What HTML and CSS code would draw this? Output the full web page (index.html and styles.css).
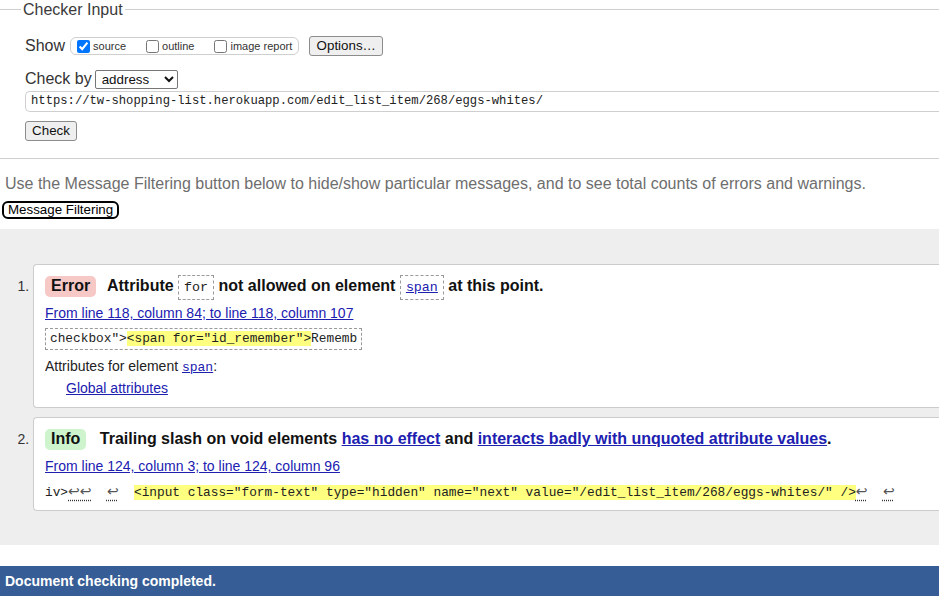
FILE: index.html
```html
<!DOCTYPE html>
<html lang="en">
<head>
<meta charset="utf-8">
<title>Nu Html Checker</title>
<link rel="stylesheet" href="styles.css">
</head>
<body>
<fieldset class="checker">
  <legend class="checker-legend">Checker Input</legend>
  <div class="row show-row">
    <span class="row-label">Show</span>
    <span class="pill">
      <label class="opt"><input class="cb" type="checkbox" checked><span>source</span></label>
      <label class="opt"><input class="cb" type="checkbox"><span>outline</span></label>
      <label class="opt"><input class="cb" type="checkbox"><span>image report</span></label>
    </span>
    <button class="btn options-btn" type="button">Options…</button>
  </div>
  <div class="row by-row">
    <span class="row-label">Check by</span>
    <select class="select"><option>address</option></select>
  </div>
  <div class="url">https://tw-shopping-list.herokuapp.com/edit_list_item/268/eggs-whites/</div>
  <button class="btn check-btn" type="button">Check</button>
</fieldset>

<p class="hint">Use the Message Filtering button below to hide/show particular messages, and to see total counts of errors and warnings.</p>
<button class="filter-btn" type="button">Message Filtering</button>

<section class="results">
  <ol class="messages">
    <li class="msg">
      <p class="msg-title"><strong class="badge badge-error">Error</strong> Attribute <code class="tcode">for</code> not allowed on element <code class="tcode"><a class="link" href="#">span</a></code> at this point.</p>
      <p class="loc"><a class="link" href="#">From line 118, column 84; to line 118, column 107</a></p>
      <p class="extract boxed"><code class="ecode">checkbox"&gt;<mark class="hl">&lt;span for="id_remember"&gt;</mark>Rememb</code></p>
      <p class="attrs">Attributes for element <a class="link mono" href="#">span</a>:</p>
      <p class="global"><a class="link" href="#">Global attributes</a></p>
    </li>
    <li class="msg">
      <p class="msg-title"><strong class="badge badge-info">Info</strong> Trailing slash on void elements <a class="link" href="#">has no effect</a> and <a class="link" href="#">interacts badly with unquoted attribute values</a>.</p>
      <p class="loc"><a class="link" href="#">From line 124, column 3; to line 124, column 96</a></p>
      <p class="extract"><code class="ecode">iv&gt;<span class="ret">↩↩</span>  <span class="ret">↩</span>  <mark class="hl">&lt;input class="form-text" type="hidden" name="next" value="/edit_list_item/268/eggs-whites/" /&gt;</mark><span class="ret">↩</span>  <span class="ret">↩</span></code></p>
    </li>
  </ol>
</section>

<div class="done">Document checking completed.</div>
</body>
</html>
```

FILE: styles.css
```css
html, body {
  margin: 0;
  padding: 0;
  background: #fff;
}

body {
  font-family: "Liberation Sans", Arial, sans-serif;
  color: #222;
  overflow-x: hidden;
}

/* ---------- Checker input fieldset ---------- */
.checker {
  margin: 1px 0 0;
  padding: 0 0 17px 25px;
  border: none;
  border-top: 1px solid #cfcfcf;
  border-bottom: 1px solid #cfcfcf;
  min-inline-size: 0;
}

.checker-legend {
  margin-left: -4px;
  padding: 0 2px;
  font-size: 16px;
  line-height: 17px;
  color: #3a3a3a;
}

.row {
  display: flex;
  align-items: center;
  height: 22px;
}

.show-row {
  margin-top: 17px;
}

.by-row {
  margin-top: 11px;
}

.row-label {
  font-size: 16px;
  color: #333;
}

.pill {
  display: flex;
  align-items: center;
  gap: 20px;
  height: 18px;
  box-sizing: border-box;
  margin-left: 5px;
  padding: 0 6px 0 6px;
  border: 1px solid #cfcfcf;
  border-radius: 6px;
}

.opt {
  display: flex;
  align-items: center;
  gap: 3px;
  font-size: 11px;
  color: #333;
}

.cb {
  width: 13px;
  height: 13px;
  margin: 0;
}

.btn {
  font-family: "Liberation Sans", Arial, sans-serif;
  font-size: 13.33px;
  color: #111;
  background: #efefef;
  border: 1px solid #8c8c8c;
  border-radius: 3px;
  padding: 0 6px;
  height: 20px;
  line-height: 16px;
}

.options-btn {
  margin-left: 10px;
  width: 74px;
}

.select {
  margin-left: 3px;
  width: 83px;
  height: 19px;
  font-family: "Liberation Sans", Arial, sans-serif;
  font-size: 13.33px;
  color: #111;
  background: #fff;
  border: 1px solid #767676;
  border-radius: 2px;
  padding: 0 0 0 2px;
}

.url {
  margin-top: 1px;
  height: 21px;
  box-sizing: border-box;
  padding: 0 5px;
  border: 1px solid #cfcfcf;
  border-right: none;
  border-radius: 5px 0 0 5px;
  font-family: "Liberation Mono", "DejaVu Sans Mono", monospace;
  font-size: 12.2px;
  line-height: 19px;
  color: #222;
  white-space: nowrap;
}

.check-btn {
  display: block;
  margin-top: 9px;
  width: 52px;
}

/* ---------- Hint and filter ---------- */
.hint {
  margin: 16px 0 0;
  padding: 0 5px;
  font-size: 16px;
  line-height: 18px;
  color: #6e6e6e;
  white-space: nowrap;
}

.filter-btn {
  display: block;
  margin: 8px 0 0 2px;
  height: 18px;
  padding: 0 4px;
  font-family: "Liberation Sans", Arial, sans-serif;
  font-size: 13.33px;
  line-height: 14px;
  color: #000;
  background: #fff;
  border: 2px solid #000;
  border-radius: 6px;
}

/* ---------- Results ---------- */
.results {
  margin-top: 10px;
  padding: 35px 0 34px;
  background: #eeeeee;
}

.messages {
  margin: 0;
  padding: 0 0 0 33px;
  font-size: 14px;
  color: #222;
}

.msg {
  background: #fff;
  border: 1px solid #cccccc;
  border-right: none;
  border-radius: 4px 0 0 4px;
  padding: 8px 0 11px 11px;
}

.msg + .msg {
  margin-top: 9px;
  padding-bottom: 8px;
}

.msg::marker {
  color: #333;
  font-size: 14px;
}

.msg p {
  margin: 0;
}

.msg-title {
  height: 26px;
  font-size: 16px;
  font-weight: bold;
  line-height: 26px;
  color: #111;
  white-space: nowrap;
}

.badge {
  display: inline-block;
  padding: 1px 6px 2px;
  line-height: 18px;
  border-radius: 5px;
  margin-right: 7px;
  color: #111;
}

.badge-error {
  background: #f6c8c6;
}

.badge-info {
  background: #cdf4cd;
  margin-right: 9px;
}

.tcode {
  font-family: "Liberation Mono", "DejaVu Sans Mono", monospace;
  font-size: 13.33px;
  font-weight: normal;
  line-height: 1;
  padding: 4px 5px;
  border: 1px dashed #999;
  color: #222;
}

.link {
  color: #2020b0;
  text-decoration: underline;
}

.mono {
  font-family: "Liberation Mono", "DejaVu Sans Mono", monospace;
  font-size: 13px;
  line-height: 1;
}

.loc {
  margin-top: 6px !important;
  height: 16px;
  line-height: 16px;
  font-size: 14px;
}

.extract {
  margin-top: 7px !important;
  height: 16px;
  line-height: 16px;
  font-family: "Liberation Mono", "DejaVu Sans Mono", monospace;
  font-size: 12.8px;
  white-space: pre;
}

.msg + .msg .extract {
  margin-top: 8px !important;
  padding: 2px 0;
}

.boxed {
  width: fit-content;
  padding: 2px 4px;
  border: 1px dashed #999;
}

.ecode {
  font-family: "Liberation Mono", "DejaVu Sans Mono", monospace;
  font-size: 12.8px;
  line-height: 1;
  color: #222;
}

.hl {
  background: #ffff80;
  color: #222;
}

.ret {
  font-family: "DejaVu Sans", sans-serif;
  font-size: 14px;
  line-height: 1;
  color: #555;
  text-decoration: underline dotted #333;
  text-underline-offset: 4px;
}

.attrs {
  margin-top: 8px !important;
  height: 16px;
  line-height: 16px;
}

.global {
  margin-top: 6px !important;
  height: 16px;
  padding-left: 21px;
  line-height: 16px;
}

/* ---------- Footer bar ---------- */
.done {
  margin-top: 21px;
  height: 30px;
  padding-left: 5px;
  line-height: 30px;
  font-size: 14px;
  font-weight: bold;
  color: #fff;
  background: #365d95;
}
```
